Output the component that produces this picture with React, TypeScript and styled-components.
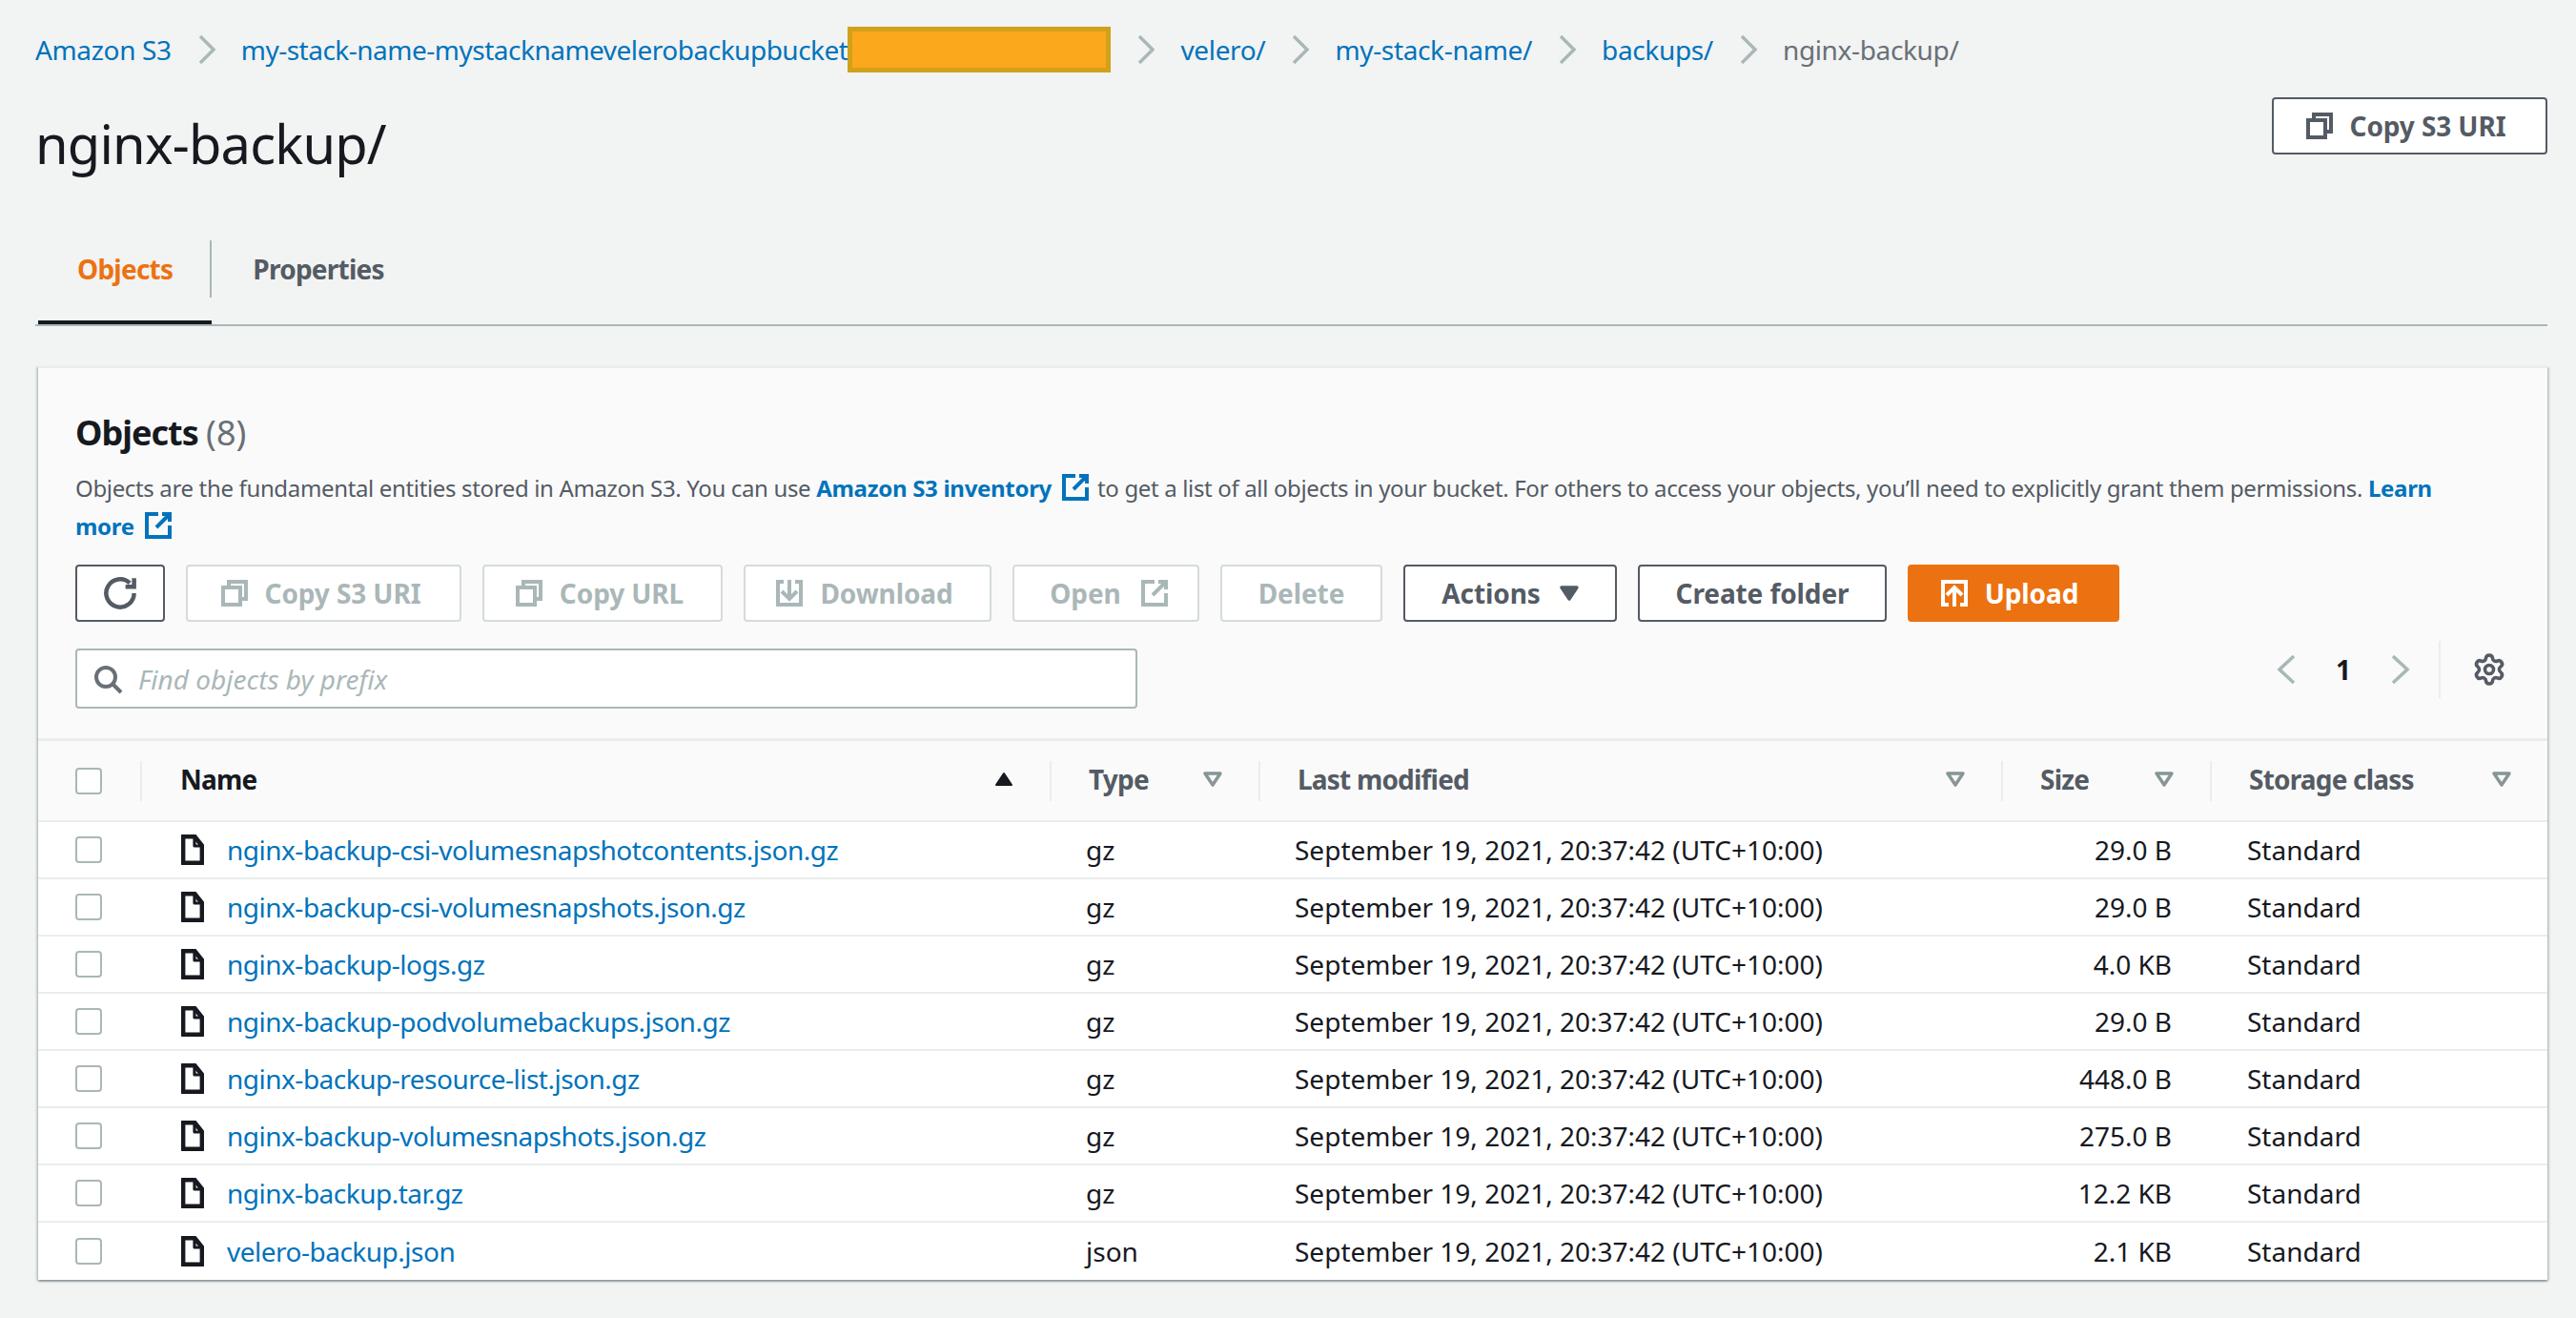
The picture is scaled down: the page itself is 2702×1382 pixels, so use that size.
import React from "react";
import styled, { createGlobalStyle } from "styled-components";
import { Settings } from "lucide-react";

const GlobalStyle = createGlobalStyle`
  html, body {
    margin: 0;
    padding: 0;
    background: #f2f3f3;
    font-family: "Noto Sans", "Open Sans", sans-serif;
    color: #16191f;
  }
`;

const COLUMNS = "107px 954px 219px 779px 219px 354px";

const Page = styled.div`
  width: 2702px;
  height: 1382px;
  box-sizing: border-box;
  padding: 32px 30px 0 37px;
  overflow: hidden;
`;

const Breadcrumbs = styled.nav`
  display: flex;
  align-items: center;
  height: 40px;
  font-size: 28px;
`;

const Crumb = styled.a<{ $current?: boolean; $long?: boolean }>`
  color: ${(p) => (p.$current ? "#687078" : "#0073bb")};
  letter-spacing: ${(p) => (p.$long ? "-0.5px" : "-0.35px")};
  white-space: nowrap;
`;

const CrumbSep = styled.svg`
  width: 18px;
  height: 30px;
  margin: 0 27px 0 28px;
  fill: none;
  stroke: #aab7b8;
  stroke-width: 3.4;
`;

const Redacted = styled.span`
  display: inline-block;
  box-sizing: border-box;
  width: 276px;
  height: 48px;
  background: #fca81c;
  border: 5px solid #d1a11b;
`;

const TitleRow = styled.div`
  display: flex;
  justify-content: space-between;
  align-items: flex-start;
  height: 120px;
  margin-top: 30px;
`;

const Title = styled.h1`
  margin: 12px 0 0;
  font-size: 56px;
  line-height: 72px;
  font-weight: 400;
  letter-spacing: -0.8px;
`;

const Button = styled.button<{
  $variant?: "normal" | "disabled" | "primary";
  $width: number;
  $gap?: number;
  $nudge?: number;
  $lead?: number;
}>`
  display: flex;
  align-items: center;
  justify-content: center;
  gap: ${(p) => p.$gap ?? 16}px;
  box-sizing: border-box;
  width: ${(p) => p.$width}px;
  height: 60px;
  padding: 0 ${(p) => p.$nudge ?? 0}px 0 ${(p) => p.$lead ?? 0}px;
  border-radius: 4px;
  font-family: inherit;
  font-size: 28px;
  font-weight: 700;
  letter-spacing: -0.1px;
  white-space: nowrap;
  background: ${(p) => (p.$variant === "primary" ? "#ec7211" : "#ffffff")};
  color: ${(p) =>
    p.$variant === "primary" ? "#ffffff" : p.$variant === "disabled" ? "#aab7b8" : "#545b64"};
  border: 2px solid
    ${(p) =>
      p.$variant === "primary" ? "#ec7211" : p.$variant === "disabled" ? "#d5dbdb" : "#545b64"};
`;

const Glyph = styled.svg<{ $size?: number }>`
  flex: none;
  width: ${(p) => p.$size ?? 32}px;
  height: ${(p) => p.$size ?? 32}px;
  fill: none;
  stroke: currentColor;
  stroke-width: 2;
`;

const Tabs = styled.div`
  display: flex;
  height: 118px;
  border-bottom: 2px solid #aab7b8;
  padding-left: 3px;
`;

const Tab = styled.div<{ $active?: boolean; $divided?: boolean }>`
  position: relative;
  display: flex;
  align-items: center;
  box-sizing: border-box;
  height: 118px;
  padding: 2px 41px 0 ${(p) => (p.$divided ? 41 : 43)}px;
  font-size: 28px;
  font-weight: 700;
  letter-spacing: -0.75px;
  color: ${(p) => (p.$active ? "#ec7211" : "#545b64")};

  &::before {
    content: "";
    display: ${(p) => (p.$divided ? "block" : "none")};
    position: absolute;
    right: 0;
    top: 30px;
    height: 60px;
    width: 2px;
    background: #aab7b8;
  }

  &::after {
    content: "";
    display: ${(p) => (p.$active ? "block" : "none")};
    position: absolute;
    left: 0;
    right: 0;
    bottom: 0;
    height: 4px;
    background: #16191f;
  }
`;

const Card = styled.section`
  margin: 42px 0 0 3px;
  background: #fafafa;
  box-shadow: 0 2px 2px 0 rgba(0, 28, 36, 0.3), 2px 1px 2px 0 rgba(0, 28, 36, 0.15),
    -2px 1px 2px 0 rgba(0, 28, 36, 0.15);
  border-top: 2px solid #eaeded;
`;

const CardHead = styled.div`
  padding: 46px 40px 31px 39px;
  border-bottom: 3px solid #eaeded;
`;

const Heading = styled.h2`
  margin: 0;
  font-size: 36px;
  line-height: 44px;
  font-weight: 700;
  letter-spacing: -1px;
`;

const Count = styled.span`
  font-weight: 400;
  letter-spacing: 0;
  color: #687078;
`;

const Description = styled.p`
  max-width: 2500px;
  margin: 16px 0 0;
  font-size: 24px;
  line-height: 40px;
  letter-spacing: -0.35px;
  color: #545b64;
`;

const InfoLink = styled.a`
  font-weight: 700;
  letter-spacing: -0.3px;
  color: #0073bb;
`;

const ExternalMark = styled(Glyph)`
  display: inline-block;
  vertical-align: -6px;
  margin: 0 7px 0 9px;
  color: #0073bb;
`;

const Toolbar = styled.div`
  display: flex;
  gap: 22px;
  margin-top: 20px;
`;

const FindRow = styled.div`
  display: flex;
  justify-content: space-between;
  margin-top: 28px;
`;

const SearchBox = styled.div`
  display: flex;
  align-items: center;
  gap: 16px;
  box-sizing: border-box;
  width: 1114px;
  height: 63px;
  padding: 0 16px;
  background: #ffffff;
  border: 2px solid #aab7b8;
  border-radius: 4px;
  color: #687078;
`;

const Placeholder = styled.span`
  font-size: 28px;
  font-style: italic;
  color: #aab7b8;
`;

const Pager = styled.div`
  display: flex;
  align-items: center;
  height: 60px;
  margin-top: -8px;
  margin-right: 3px;
`;

const PageNumber = styled.span`
  width: 30px;
  margin: 0 35px;
  text-align: center;
  font-size: 28px;
  font-weight: 700;
`;

const PagerChevron = styled.svg`
  width: 20px;
  height: 32px;
  fill: none;
  stroke: #aab7b8;
  stroke-width: 3.6;
`;

const PagerSettings = styled.div`
  display: flex;
  align-items: center;
  height: 60px;
  margin-left: 30px;
  padding-left: 33px;
  border-left: 2px solid #eaeded;
  color: #545b64;
`;

const HeaderRow = styled.div`
  display: grid;
  grid-template-columns: ${COLUMNS};
  align-items: center;
  box-sizing: border-box;
  height: 85px;
  border-bottom: 2px solid #eaeded;
`;

const HeaderCell = styled.div<{ $sorted?: boolean }>`
  display: flex;
  align-items: center;
  justify-content: space-between;
  box-sizing: border-box;
  height: 42px;
  padding: 0 38px 3px ${(p) => (p.$sorted ? 40 : 39)}px;
  border-left: 2px solid #eaeded;
  font-size: 28px;
  font-weight: 700;
  letter-spacing: -0.8px;
  color: ${(p) => (p.$sorted ? "#16191f" : "#545b64")};
`;

const Row = styled.div<{ $last?: boolean }>`
  display: grid;
  grid-template-columns: ${COLUMNS};
  align-items: center;
  box-sizing: border-box;
  height: 60px;
  background: #ffffff;
  font-size: 28px;
  border-bottom: ${(p) => (p.$last ? "0" : "2px solid #eaeded")};
`;

const CheckCell = styled.div`
  padding-left: 39px;
`;

const Checkbox = styled.span`
  display: block;
  box-sizing: border-box;
  width: 28px;
  height: 28px;
  background: #ffffff;
  border: 2px solid #aab7b8;
  border-radius: 4px;
`;

const NameCell = styled.div`
  display: flex;
  align-items: center;
  gap: 24px;
  padding-left: 43px;
`;

const FileName = styled.a`
  color: #0073bb;
  letter-spacing: -0.5px;
`;

const Cell = styled.div<{ $right?: boolean; $inset?: number }>`
  padding: 0 ${(p) => (p.$right ? 40 : 0)}px 0 ${(p) => p.$inset ?? 38}px;
  text-align: ${(p) => (p.$right ? "right" : "left")};
`;

const FileGlyph = styled.svg`
  flex: none;
  width: 24px;
  height: 32px;
  fill: none;
  stroke: #16191f;
  stroke-width: 2.4;
  stroke-linejoin: round;
`;

const CopyIcon = () => (
  <Glyph viewBox="0 0 16 16">
    <path d="M2 5h9v9H2z" />
    <path d="M5 5V2h9v9h-3" />
  </Glyph>
);

const DownloadIcon = () => (
  <Glyph viewBox="0 0 16 16">
    <path d="M5 2H2v12h12V2h-3" />
    <path d="M4 7l4 4 4-4M8 1v10" />
  </Glyph>
);

const UploadIcon = () => (
  <Glyph viewBox="0 0 16 16">
    <path d="M5 14H2V2h12v12h-3" />
    <path d="M4 9l4-4 4 4M8 15V5" />
  </Glyph>
);

const ExternalPaths = () => (
  <>
    <path d="M8 2H2v12h12V8" />
    <path d="M10 2h4v4M14 2L7 9" />
  </>
);

const RefreshIcon = () => (
  <Glyph viewBox="0 0 16 16" $size={36}>
    <path d="M14.5 8a6.5 6.5 0 1 1-2-4.7" />
    <path d="M14.5 1v4h-4" />
  </Glyph>
);

const SearchIcon = () => (
  <Glyph viewBox="0 0 16 16">
    <circle cx="7" cy="7" r="5" />
    <path d="M11 11l4 4" />
  </Glyph>
);

const FileIcon = () => (
  <FileGlyph viewBox="0 0 12 16">
    <path d="M7 1v5h4" strokeWidth="1.6" />
    <path d="M11 15H1V1h6l4 5v9z" />
  </FileGlyph>
);

const Chevron = ({ dir }: { dir: "left" | "right" }) => (
  <PagerChevron viewBox="0 0 20 32">
    <path d={dir === "left" ? "M18 2L3 16l15 14" : "M2 2l15 14L2 30"} />
  </PagerChevron>
);

const BreadcrumbSeparator = () => (
  <CrumbSep viewBox="0 0 18 30">
    <path d="M2 1l14 14L2 29" />
  </CrumbSep>
);

const CaretDown = ({ filled }: { filled?: boolean }) => (
  <svg width="20" height="16" viewBox="0 0 20 16" style={{ flex: "none" }}>
    <path
      d="M2 2h16l-8 12z"
      fill={filled ? "#545b64" : "none"}
      stroke={filled ? "#545b64" : "#879596"}
      strokeWidth="3.4"
      strokeLinejoin="round"
    />
  </svg>
);

const CaretUp = () => (
  <svg width="20" height="16" viewBox="0 0 20 16" style={{ flex: "none" }}>
    <path d="M2 14h16L10 2z" fill="#16191f" stroke="#16191f" strokeWidth="2" strokeLinejoin="round" />
  </svg>
);

const files = [
  { name: "nginx-backup-csi-volumesnapshotcontents.json.gz", type: "gz", size: "29.0 B" },
  { name: "nginx-backup-csi-volumesnapshots.json.gz", type: "gz", size: "29.0 B" },
  { name: "nginx-backup-logs.gz", type: "gz", size: "4.0 KB" },
  { name: "nginx-backup-podvolumebackups.json.gz", type: "gz", size: "29.0 B" },
  { name: "nginx-backup-resource-list.json.gz", type: "gz", size: "448.0 B" },
  { name: "nginx-backup-volumesnapshots.json.gz", type: "gz", size: "275.0 B" },
  { name: "nginx-backup.tar.gz", type: "gz", size: "12.2 KB" },
  { name: "velero-backup.json", type: "json", size: "2.1 KB" },
];

const App = () => {
  return (
    <Page>
      <GlobalStyle />
      <Breadcrumbs>
        <Crumb>Amazon S3</Crumb>
        <BreadcrumbSeparator />
        <Crumb $long>my-stack-name-mystacknamevelerobackupbucket</Crumb>
        <Redacted />
        <BreadcrumbSeparator />
        <Crumb>velero/</Crumb>
        <BreadcrumbSeparator />
        <Crumb>my-stack-name/</Crumb>
        <BreadcrumbSeparator />
        <Crumb>backups/</Crumb>
        <BreadcrumbSeparator />
        <Crumb $current>nginx-backup/</Crumb>
      </Breadcrumbs>

      <TitleRow>
        <Title>nginx-backup/</Title>
        <Button $width={289} $nudge={10}>
          <CopyIcon />
          Copy S3 URI
        </Button>
      </TitleRow>

      <Tabs>
        <Tab $active $divided>Objects</Tab>
        <Tab>Properties</Tab>
      </Tabs>

      <Card>
        <CardHead>
          <Heading>
            Objects <Count>(8)</Count>
          </Heading>
          <Description>
            Objects are the fundamental entities stored in Amazon S3. You can use{" "}
            <InfoLink>Amazon S3 inventory</InfoLink>
            <ExternalMark viewBox="0 0 16 16"><ExternalPaths /></ExternalMark>
            to get a list of all objects in your bucket. For others to access your objects, you’ll
            need to explicitly grant them permissions. <InfoLink>Learn</InfoLink>{" "}
            <InfoLink>more</InfoLink>
            <ExternalMark viewBox="0 0 16 16"><ExternalPaths /></ExternalMark>
          </Description>
          <Toolbar>
            <Button $width={94}><RefreshIcon /></Button>
            <Button $width={289} $variant="disabled" $nudge={8}><CopyIcon />Copy S3 URI</Button>
            <Button $width={252} $variant="disabled" $nudge={8}><CopyIcon />Copy URL</Button>
            <Button $width={260} $variant="disabled" $nudge={8}><DownloadIcon />Download</Button>
            <Button $width={196} $variant="disabled" $gap={19} $lead={8}>
              Open
              <Glyph viewBox="0 0 16 16"><ExternalPaths /></Glyph>
            </Button>
            <Button $width={170} $variant="disabled">Delete</Button>
            <Button $width={224} $gap={20}>Actions <CaretDown filled /></Button>
            <Button $width={261}>Create folder</Button>
            <Button $width={222} $variant="primary" $nudge={10}><UploadIcon />Upload</Button>
          </Toolbar>
          <FindRow>
            <SearchBox>
              <SearchIcon />
              <Placeholder>Find objects by prefix</Placeholder>
            </SearchBox>
            <Pager>
              <Chevron dir="left" />
              <PageNumber>1</PageNumber>
              <Chevron dir="right" />
              <PagerSettings>
                <Settings size={36} strokeWidth={2.4} />
              </PagerSettings>
            </Pager>
          </FindRow>
        </CardHead>

        <HeaderRow>
          <CheckCell><Checkbox /></CheckCell>
          <HeaderCell $sorted>Name <CaretUp /></HeaderCell>
          <HeaderCell>Type <CaretDown /></HeaderCell>
          <HeaderCell>Last modified <CaretDown /></HeaderCell>
          <HeaderCell>Size <CaretDown /></HeaderCell>
          <HeaderCell>Storage class <CaretDown /></HeaderCell>
        </HeaderRow>

        {files.map((file, i) => (
          <Row key={file.name} $last={i === files.length - 1}>
            <CheckCell><Checkbox /></CheckCell>
            <NameCell>
              <FileIcon />
              <FileName>{file.name}</FileName>
            </NameCell>
            <Cell>{file.type}</Cell>
            <Cell>September 19, 2021, 20:37:42 (UTC+10:00)</Cell>
            <Cell $right>{file.size}</Cell>
            <Cell $inset={39}>Standard</Cell>
          </Row>
        ))}
      </Card>
    </Page>
  );
};

export default App;
